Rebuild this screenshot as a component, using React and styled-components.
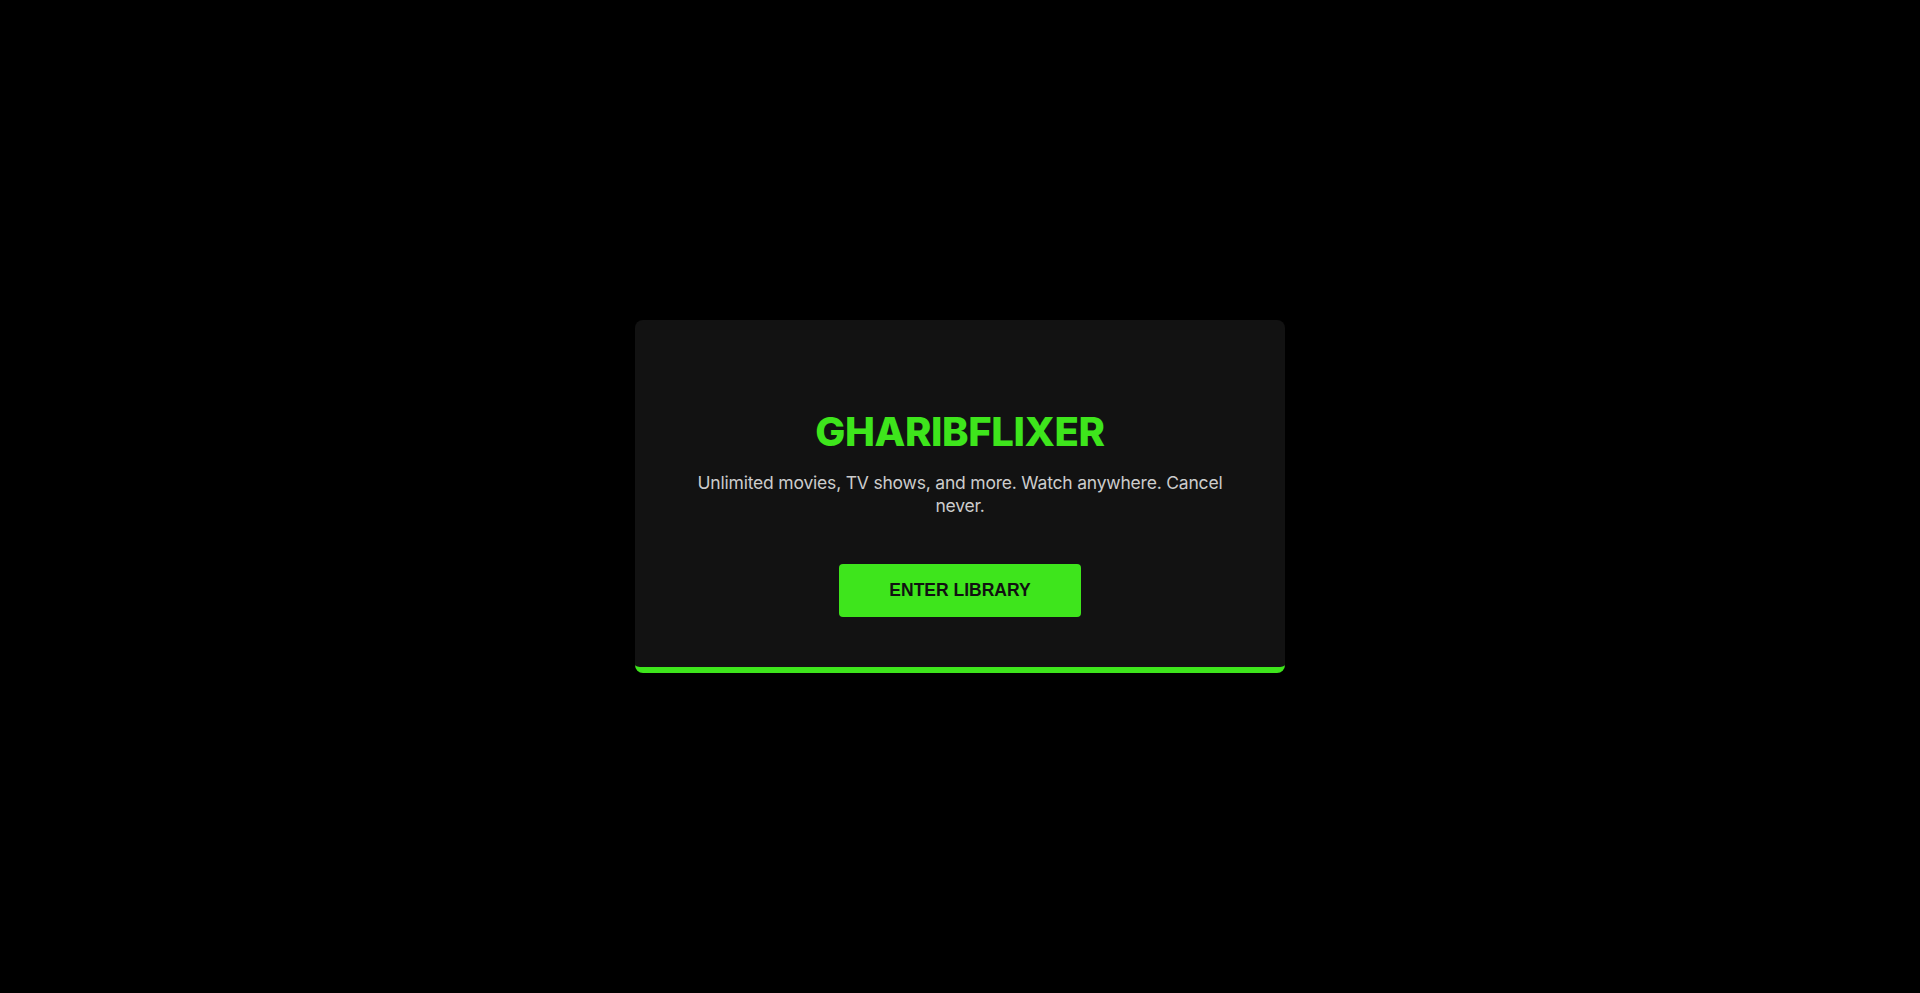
import React from 'react';
import styled, { createGlobalStyle } from 'styled-components';

const GlobalStyle = createGlobalStyle`
  html, body {
    margin: 0;
    padding: 0;
    background: #000;
  }
  body {
    font-family: Inter, "Noto Sans", sans-serif;
  }
`;

const Page = styled.div`
  min-height: 100vh;
  display: flex;
  align-items: center;
  justify-content: center;
  background: #000;
`;

const Card = styled.div`
  width: 650px;
  box-sizing: border-box;
  background: #121212;
  border-radius: 8px;
  border-bottom: 6px solid #3ee51c;
  padding: 88px 48px 50px;
  display: flex;
  flex-direction: column;
  align-items: center;
  text-align: center;
`;

const Title = styled.h1`
  margin: 0;
  font-family: Inter, "Noto Sans", sans-serif;
  font-size: 40px;
  line-height: 48px;
  font-weight: 800;
  color: #3ee51c;
  letter-spacing: -0.4px;
`;

const Tagline = styled.p`
  margin: 15px 0 0;
  font-family: Inter, "Noto Sans", sans-serif;
  font-size: 17.5px;
  line-height: 23px;
  color: #cccccc;
  letter-spacing: -0.2px;
`;

const EnterButton = styled.button`
  margin-top: 47px;
  width: 242px;
  height: 53px;
  border: none;
  border-radius: 4px;
  background: #3ee51c;
  color: #111;
  font-family: "Liberation Sans", Arial, sans-serif;
  font-size: 17.5px;
  font-weight: 700;
  cursor: pointer;
`;

const App = () => {
  return (
    <>
      <GlobalStyle />
      <Page>
        <Card>
          <Title>GHARIBFLIXER</Title>
          <Tagline>
            Unlimited movies, TV shows, and more. Watch anywhere. Cancel never.
          </Tagline>
          <EnterButton type="button">ENTER LIBRARY</EnterButton>
        </Card>
      </Page>
    </>
  );
};

export default App;
